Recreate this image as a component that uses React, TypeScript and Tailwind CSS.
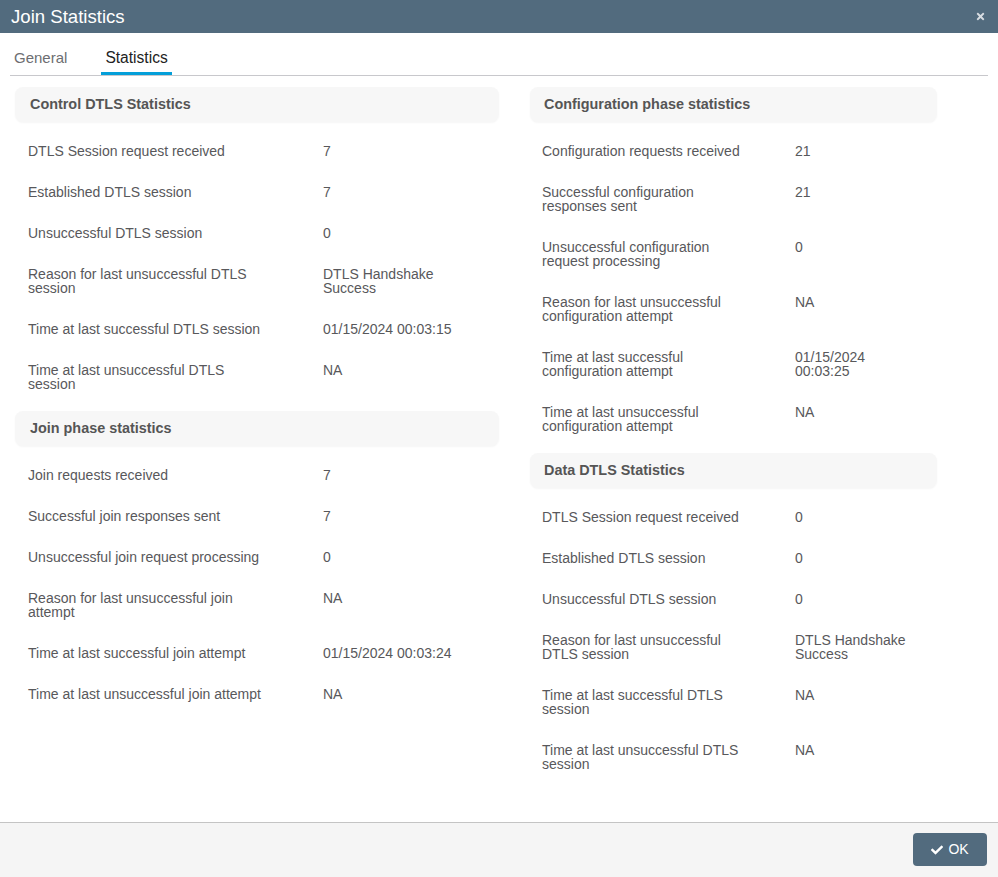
import { FaCheck, FaTimes } from "react-icons/fa";

type Row = { label: string; value: string };

const controlDtls: Row[] = [
  { label: "DTLS Session request received", value: "7" },
  { label: "Established DTLS session", value: "7" },
  { label: "Unsuccessful DTLS session", value: "0" },
  { label: "Reason for last unsuccessful DTLS session", value: "DTLS Handshake Success" },
  { label: "Time at last successful DTLS session", value: "01/15/2024 00:03:15" },
  { label: "Time at last unsuccessful DTLS session", value: "NA" },
];

const joinPhase: Row[] = [
  { label: "Join requests received", value: "7" },
  { label: "Successful join responses sent", value: "7" },
  { label: "Unsuccessful join request processing", value: "0" },
  { label: "Reason for last unsuccessful join attempt", value: "NA" },
  { label: "Time at last successful join attempt", value: "01/15/2024 00:03:24" },
  { label: "Time at last unsuccessful join attempt", value: "NA" },
];

const configPhase: Row[] = [
  { label: "Configuration requests received", value: "21" },
  { label: "Successful configuration responses sent", value: "21" },
  { label: "Unsuccessful configuration request processing", value: "0" },
  { label: "Reason for last unsuccessful configuration attempt", value: "NA" },
  { label: "Time at last successful configuration attempt", value: "01/15/2024 00:03:25" },
  { label: "Time at last unsuccessful configuration attempt", value: "NA" },
];

const dataDtls: Row[] = [
  { label: "DTLS Session request received", value: "0" },
  { label: "Established DTLS session", value: "0" },
  { label: "Unsuccessful DTLS session", value: "0" },
  { label: "Reason for last unsuccessful DTLS session", value: "DTLS Handshake Success" },
  { label: "Time at last successful DTLS session", value: "NA" },
  { label: "Time at last unsuccessful DTLS session", value: "NA" },
];

function Section({ title, rows, wide }: { title: string; rows: Row[]; wide?: boolean }) {
  return (
    <div>
      <div className={`h-[35px] rounded-[8px] bg-[#f7f7f7] shadow-[0_1px_2px_rgba(0,0,0,0.04)] flex items-center text-[14.4px] font-bold text-[#555] ${wide ? "pl-[15px]" : "pl-[14px]"}`}>
        {title}
      </div>
      <div className="flex flex-col gap-[27px] pt-[22px] pb-[20px]">
        {rows.map((r) => (
          <div key={r.label} className="flex text-[14px] leading-[14px] text-[#58585b]">
            <div className={wide ? "w-[308px] pl-[13px] pr-[55px]" : "w-[265px] pl-[12px] pr-[45px]"}>{r.label}</div>
            <div className={wide ? "w-[150px]" : "w-[120px]"}>{r.value}</div>
          </div>
        ))}
      </div>
    </div>
  );
}

export default function App() {
  return (
    <div className="w-[998px] h-[877px] flex flex-col bg-white font-['Liberation_Sans',Arial,sans-serif]">
      {/* Title bar */}
      <div className="h-[33px] shrink-0 bg-[#526b7e] flex items-center justify-between pl-[11px] pr-[12px]">
        <span className="text-[18.6px] text-white">Join Statistics</span>
        <FaTimes className="w-[11px] h-[11px] text-[#d8dde2]" />
      </div>

      {/* Tabs */}
      <div className="mx-[10px] h-[43px] shrink-0 border-b border-[#c8c8cc] flex items-end gap-[30px]">
        <div className="px-[4px] pb-[5px] border-b-[3px] border-transparent text-[15px] leading-[18px] text-[#6d6e71]">General</div>
        <div className="px-[4px] pb-[5px] border-b-[3px] border-[#049fd9] text-[15.6px] leading-[18px] text-[#222]">Statistics</div>
      </div>

      {/* Body */}
      <div className="flex-1 flex pl-[15px] pt-[11px] gap-[31px]">
        <div className="w-[484px]">
          <Section title="Control DTLS Statistics" rows={controlDtls} wide />
          <Section title="Join phase statistics" rows={joinPhase} wide />
        </div>
        <div className="w-[407px]">
          <Section title="Configuration phase statistics" rows={configPhase} />
          <Section title="Data DTLS Statistics" rows={dataDtls} />
        </div>
      </div>

      {/* Footer */}
      <div className="h-[55px] shrink-0 border-t border-[#c4c4c4] bg-[#f5f5f5] flex items-start justify-end pt-[10px] pr-[11px]">
        <button className="w-[74px] h-[33px] rounded-[4px] bg-[#526b7e] text-white text-[14px] flex items-center justify-center gap-[5px]">
          <FaCheck className="w-[12px] h-[12px]" />
          OK
        </button>
      </div>
    </div>
  );
}
